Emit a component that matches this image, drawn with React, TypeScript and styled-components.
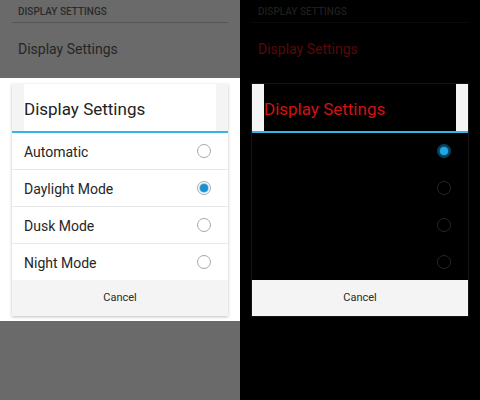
import styled, { createGlobalStyle } from 'styled-components';

const GlobalStyle = createGlobalStyle`
  html, body {
    margin: 0;
    padding: 0;
    width: 480px;
    height: 400px;
    overflow: hidden;
    font-family: Roboto, 'Noto Sans', sans-serif;
  }
`;

interface DarkProps {
  $dark?: boolean;
}

const Screen = styled.div`
  display: flex;
  width: 480px;
  height: 400px;
`;

const Panel = styled.div<DarkProps>`
  width: 240px;
  height: 400px;
  display: flex;
  flex-direction: column;
  background: ${p => (p.$dark ? '#000' : '#6a6a6a')};
`;

const Prefs = styled.div`
  height: 78px;
  padding: 0 12px;
  box-sizing: border-box;
`;

const Category = styled.div<DarkProps>`
  height: 23px;
  padding: 1px 6px 0;
  box-sizing: border-box;
  border-bottom: 1px solid ${p => (p.$dark ? '#0a0a0a' : '#555')};
  font-size: 10px;
  font-weight: 500;
  line-height: 22px;
  color: ${p => (p.$dark ? '#1e1e1e' : '#2a2a2a')};
`;

const PrefItem = styled.div<DarkProps>`
  padding: 2px 6px 0;
  font-size: 14px;
  line-height: 48px;
  color: ${p => (p.$dark ? '#5a0808' : '#262626')};
`;

const Overlay = styled.div<DarkProps>`
  height: 243px;
  padding: 6px 12px;
  box-sizing: border-box;
  background: ${p => (p.$dark ? '#000' : '#fff')};
`;

const Dialog = styled.div<DarkProps>`
  display: flex;
  flex-direction: column;
  background: ${p => (p.$dark ? '#000' : '#fff')};
  box-shadow: ${p => (p.$dark ? '0 0 0 1px #151515' : '0 1px 3px rgba(0,0,0,0.25)')};
`;

const TitleBar = styled.div`
  padding: 0 12px;
  background: #f4f4f4;
  border-bottom: 2px solid #33b5e5;
`;

const Title = styled.div<DarkProps>`
  height: 47px;
  padding-top: 2px;
  box-sizing: border-box;
  font-size: 17px;
  line-height: 47px;
  overflow: hidden;
  background: ${p => (p.$dark ? '#000' : '#fff')};
  color: ${p => (p.$dark ? '#d21212' : '#222')};
`;

const Option = styled.div<DarkProps>`
  height: 36px;
  display: flex;
  align-items: center;
  justify-content: space-between;
  padding: 0 17px 0 12px;
  font-size: 14px;
  color: #262626;
  border-bottom: 1px solid ${p => (p.$dark ? '#000' : '#e8e8e8')};

  &:last-child {
    border-bottom: none;
  }
`;

const Label = styled.span`
  padding-top: 2px;
`;

const Radio = styled.span<DarkProps & { $on?: boolean }>`
  width: 14px;
  height: 14px;
  box-sizing: border-box;
  border-radius: 50%;
  display: flex;
  align-items: center;
  justify-content: center;
  border: 1px solid ${p => (p.$dark ? (p.$on ? '#0b3a52' : '#262626') : '#a8a8a8')};
  background: ${p => (p.$dark && p.$on ? '#05202e' : 'transparent')};

  &::after {
    content: '';
    display: ${p => (p.$on ? 'block' : 'none')};
    width: 8px;
    height: 8px;
    border-radius: 50%;
    background: ${p => (p.$dark ? '#1fa8e6' : '#1c8fd1')};
    box-shadow: ${p => (p.$dark ? '0 0 3px 1px #1780b8' : '0 0 0 1px #9fd6f0')};
  }
`;

const Options = styled.div``;

const CancelButton = styled.div`
  height: 36px;
  line-height: 36px;
  text-align: center;
  font-size: 11px;
  color: #2a2a2a;
  background: #f4f4f4;
`;

const modes = ['Automatic', 'Daylight Mode', 'Dusk Mode', 'Night Mode'];

const SettingsPanel: React.FC<{ dark?: boolean; selected: number }> = ({ dark, selected }) => (
  <Panel $dark={dark}>
    <Prefs>
      <Category $dark={dark}>DISPLAY SETTINGS</Category>
      <PrefItem $dark={dark}>Display Settings</PrefItem>
    </Prefs>
    <Overlay $dark={dark}>
      <Dialog $dark={dark}>
        <TitleBar>
          <Title $dark={dark}>Display Settings</Title>
        </TitleBar>
        <Options>
          {modes.map((mode, i) => (
            <Option key={mode} $dark={dark}>
              <Label>{dark ? '' : mode}</Label>
              <Radio $dark={dark} $on={i === selected} />
            </Option>
          ))}
        </Options>
        <CancelButton>Cancel</CancelButton>
      </Dialog>
    </Overlay>
  </Panel>
);

export default function App() {
  return (
    <>
      <GlobalStyle />
      <Screen>
        <SettingsPanel selected={1} />
        <SettingsPanel dark selected={0} />
      </Screen>
    </>
  );
}
